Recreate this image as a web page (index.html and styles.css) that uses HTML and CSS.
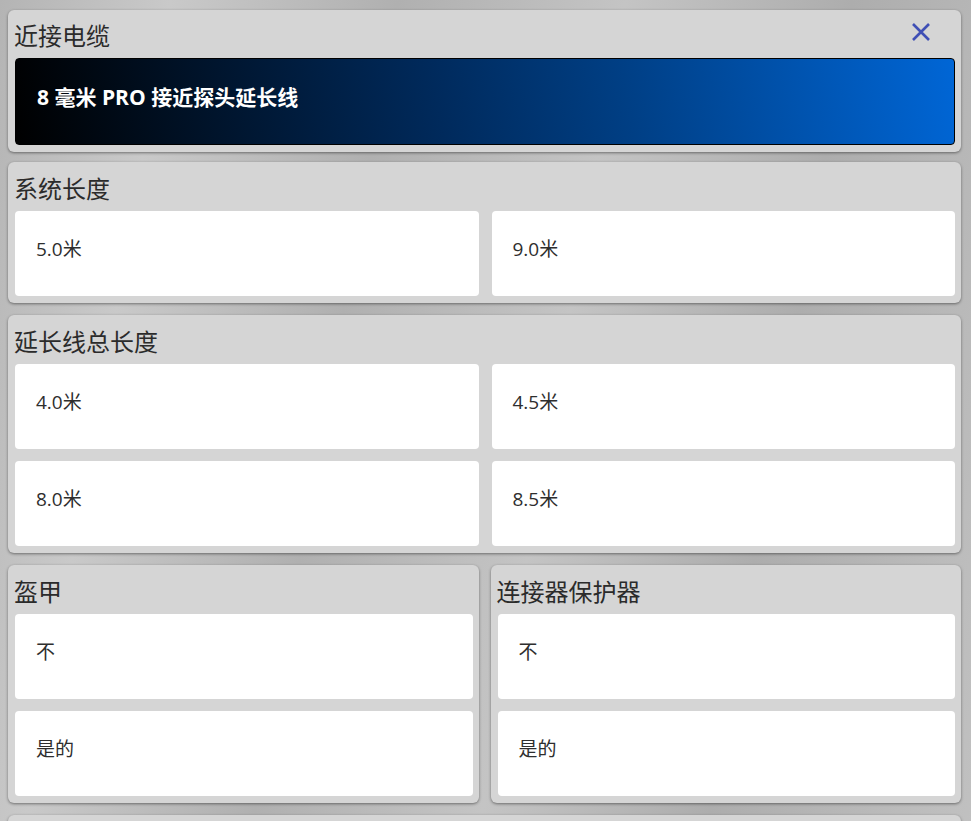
FILE: index.html
```html
<!DOCTYPE html>
<html lang="zh-CN">
<head>
    <meta charset="UTF-8">
    <meta name="viewport" content="width=device-width, initial-scale=1.0">
    <title>近接电缆</title>
    <link rel="stylesheet" href="styles.css">
</head>
<body>
    <div class="pagina">
        <section class="panel cabecera">
            <div class="titulo">
                <span>近接电缆</span>
                <button class="cerrar" type="button" aria-label="关闭">
                    <svg width="20" height="20" viewBox="0 0 20 20">
                        <path d="M2 2 L18 18 M18 2 L2 18" stroke="#3f4fb5" stroke-width="2.6" fill="none"/>
                    </svg>
                </button>
            </div>
            <div class="banner">8 毫米 PRO 接近探头延长线</div>
        </section>

        <section class="panel">
            <div class="titulo">系统长度</div>
            <div class="opciones">
                <div class="opcion">5.0米</div>
                <div class="opcion">9.0米</div>
            </div>
        </section>

        <section class="panel">
            <div class="titulo">延长线总长度</div>
            <div class="opciones">
                <div class="opcion">4.0米</div>
                <div class="opcion">4.5米</div>
                <div class="opcion">8.0米</div>
                <div class="opcion">8.5米</div>
            </div>
        </section>

        <div class="fila">
            <section class="panel">
                <div class="titulo">盔甲</div>
                <div class="opciones una">
                    <div class="opcion">不</div>
                    <div class="opcion">是的</div>
                </div>
            </section>
            <section class="panel">
                <div class="titulo">连接器保护器</div>
                <div class="opciones una">
                    <div class="opcion">不</div>
                    <div class="opcion">是的</div>
                </div>
            </section>
        </div>

        <section class="panel vacio"></section>
    </div>
</body>
</html>
```

FILE: styles.css
```css
body {
    margin: 0;
    min-height: 100vh;
    font-family: "Open Sans", "Noto Sans CJK SC", sans-serif;
    color: #2a2a2a;
    background: linear-gradient(100deg, #b4b4b4 0%, #c9c9c9 15%, #b0b0b0 35%, #c4c4c4 55%, #adadad 75%, #c2c2c2 100%);
}
.pagina {
    display: flex;
    flex-direction: column;
    gap: 12px;
    padding: 10px 10px 0 8px;
}
.panel {
    background: #d5d5d5;
    border-radius: 6px;
    box-shadow: 0 1px 3px rgba(0, 0, 0, 0.45);
    padding: 0 6px 7px 7px;
}
.cabecera {
    padding-bottom: 7px;
    margin-bottom: -2px;
}
.titulo {
    display: flex;
    justify-content: space-between;
    align-items: center;
    padding: 10px 0 5px 0;
    margin-left: -1px;
    font-size: 24px;
    line-height: 34px;
    color: #2b2b2b;
}
.cabecera .titulo {
    padding-top: 9px;
}
.cerrar {
    border: 0;
    background: none;
    padding: 0;
    margin-right: 24px;
    margin-top: -8px;
    width: 20px;
    height: 20px;
    cursor: pointer;
}
.banner {
    height: 87px;
    box-sizing: border-box;
    padding: 0 0 12px 21px;
    display: flex;
    align-items: center;
    border: 1px solid #000;
    border-radius: 4px;
    background: linear-gradient(80deg, #000 0%, #002a5c 45%, #003f85 65%, #0066d6 100%);
    color: #fff;
    font-size: 21px;
    font-weight: bold;
}
.opciones {
    display: grid;
    grid-template-columns: 1fr 1fr;
    column-gap: 13px;
    row-gap: 12px;
}
.opciones.una {
    grid-template-columns: 1fr;
}
.opcion {
    height: 85px;
    box-sizing: border-box;
    padding: 24px 21px 0 21px;
    background: #fff;
    border-radius: 4px;
    font-size: 19px;
    line-height: 28px;
    color: #2e2e2e;
    cursor: pointer;
}
.fila {
    display: grid;
    grid-template-columns: 1fr 1fr;
    gap: 12px;
}
.vacio {
    height: 120px;
}
```
